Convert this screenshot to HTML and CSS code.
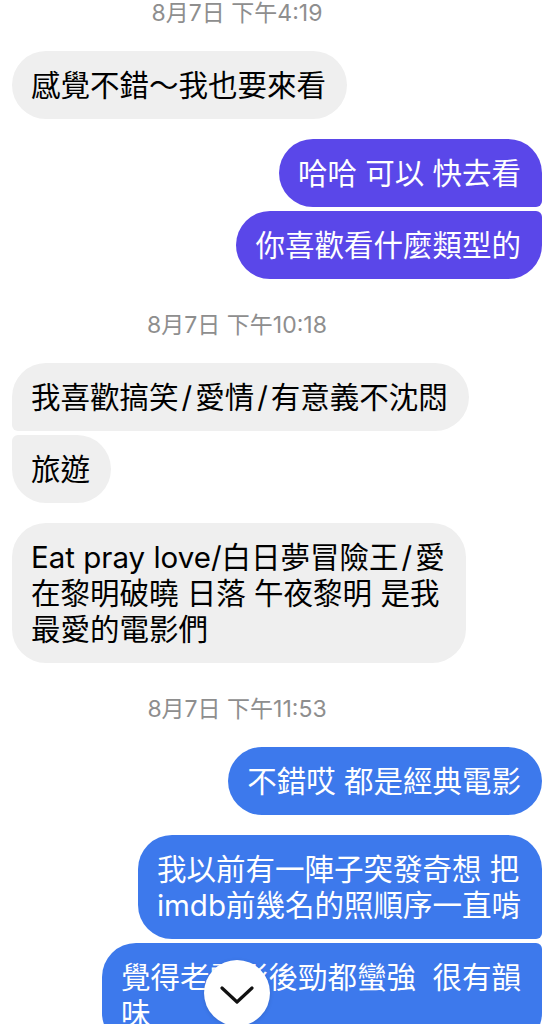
FILE: index.html
```html
<!DOCTYPE html>
<html lang="zh-Hant">
<head>
<meta charset="utf-8">
<link rel="stylesheet" href="styles.css">
</head>
<body>
<div class="chat">
  <div class="ts">8月7日 下午4:19</div>
  <div class="row in"><div class="bubble gray">感覺不錯～我也要來看</div></div>

  <div class="group out">
    <div class="bubble purple first">哈哈 可以 快去看</div>
    <div class="bubble purple last">你喜歡看什麼類型的</div>
  </div>

  <div class="ts">8月7日 下午10:18</div>
  <div class="group in">
    <div class="bubble gray first">我喜歡搞笑<span class="sl">/</span>愛情<span class="sl">/</span>有意義不沈悶</div>
    <div class="bubble gray last">旅遊</div>
  </div>
  <div class="row in"><div class="bubble gray">Eat pray love/白日夢冒險王<span class="sl">/</span>愛<br>在黎明破曉 日落 午夜黎明 是我<br>最愛的電影們</div></div>

  <div class="ts">8月7日 下午11:53</div>
  <div class="row out"><div class="bubble blue">不錯哎 都是經典電影</div></div>
  <div class="group out">
    <div class="bubble blue first">我以前有一陣子突發奇想 把<br>imdb前幾名的照順序一直啃</div>
    <div class="bubble blue last">覺得老電影後勁都蠻強&nbsp;&nbsp;很有韻<br>味</div>
  </div>
</div>
<button class="scroll-down" aria-label="scroll down">
  <svg width="34" height="20" viewBox="0 0 34 20"><path d="M2 3 L17 17 L32 3" fill="none" stroke="#111" stroke-width="3.2" stroke-linecap="round" stroke-linejoin="round"/></svg>
</button>
</body>
</html>
```
FILE: styles.css
```css
html, body {
  margin: 0;
  padding: 0;
  background: #fff;
}
body {
  width: 555px;
  height: 1024px;
  overflow: hidden;
  position: relative;
  font-family: "Inter", "Noto Sans CJK TC", sans-serif;
}
.chat {
  display: flex;
  flex-direction: column;
  padding: 1px 13px 0 12px;
}
.ts {
  width: 450px;
  text-align: center;
  font-size: 23px;
  line-height: 24px;
  color: #8e8e8e;
  margin: 0 0 26px 0;
}
.chat > .row + .ts,
.chat > .group + .ts {
  margin-top: 34px;
}
.row, .group {
  display: flex;
  flex-direction: column;
  gap: 4px;
}
.row + .row, .row + .group, .group + .row, .group + .group {
  margin-top: 20px;
}
.in { align-items: flex-start; }
.out { align-items: flex-end; }
.bubble {
  font-size: 29.5px;
  line-height: 36px;
  padding: 16px 21px 16px 19px;
  border-radius: 34px;
  color: #000;
  white-space: nowrap;
}
.sl { margin: 0 3px; }
.gray { background: #efefef; }
.purple { background: #5a47e9; color: #fff; }
.blue { background: #3d79ec; color: #fff; }
.in .first { border-bottom-left-radius: 6px; }
.in .last { border-top-left-radius: 6px; }
.out .first { border-bottom-right-radius: 6px; }
.out .last { border-top-right-radius: 6px; }
.scroll-down {
  position: absolute;
  left: 204px;
  top: 960px;
  width: 66px;
  height: 66px;
  border-radius: 50%;
  border: none;
  background: #fff;
  box-shadow: 0 1px 4px rgba(0,0,0,0.12);
  display: flex;
  align-items: center;
  justify-content: center;
  padding: 0;
}
.scroll-down svg { margin-top: 3px; }
```
